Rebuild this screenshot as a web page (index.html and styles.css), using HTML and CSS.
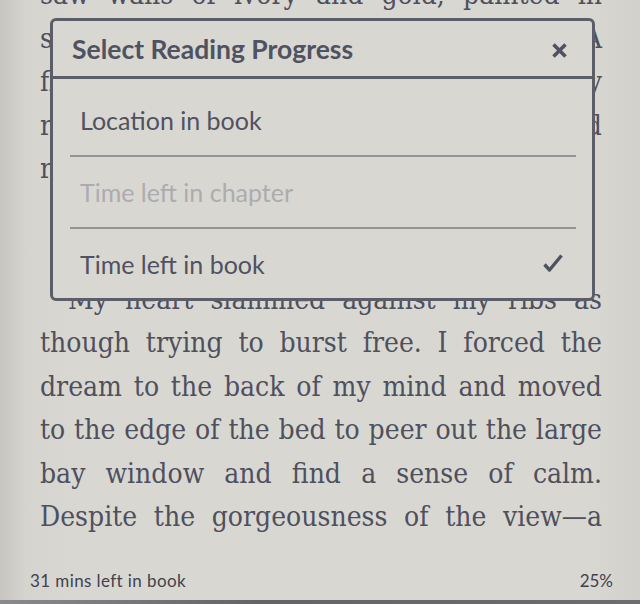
FILE: index.html
```html
<!DOCTYPE html>
<html lang="en">
<head>
    <meta charset="UTF-8">
    <meta name="viewport" content="width=device-width, initial-scale=1.0">
    <title>Reader</title>
    <link rel="stylesheet" href="styles.css">
</head>
<body>
    <div class="screen">
        <div class="page">
            <div class="line">saw walls of ivory and gold, painted in</div>
            <div class="line">scenes of a kingdom I had never seen. A</div>
            <div class="line">flock of white birds circled in the sky</div>
            <div class="line">raised above a garden of roses and sand</div>
            <div class="line last">rivers of silver.</div>
            <div class="line last indent">Then I woke.</div>
            <div class="line last indent">Alone.</div>
            <div class="line indent">My heart slammed against my ribs as</div>
            <div class="line">though trying to burst free. I forced the</div>
            <div class="line">dream to the back of my mind and moved</div>
            <div class="line">to the edge of the bed to peer out the large</div>
            <div class="line">bay window and find a sense of calm.</div>
            <div class="line">Despite the gorgeousness of the view—a</div>
        </div>

        <div class="status">
            <span class="status-left">31 mins left in book</span>
            <span>25%</span>
        </div>
        <div class="bezel"></div>

        <!-- reading progress picker -->
        <div class="dialog">
            <div class="dialog-header">
                <span class="dialog-title">Select Reading Progress</span>
                <svg class="close" width="17" height="17" viewBox="0 0 17 17">
                    <path d="M2.5 2.5 L14.5 14.5 M14.5 2.5 L2.5 14.5" stroke="#4f5260" stroke-width="3.6" stroke-linecap="butt" fill="none"/>
                </svg>
            </div>
            <ul class="options">
                <li class="option">Location in book</li>
                <li class="option disabled">Time left in chapter</li>
                <li class="option selected">
                    <span>Time left in book</span>
                    <svg class="check" width="22" height="20" viewBox="0 0 22 20">
                        <path d="M2.5 11.5 L7.5 17 L19.5 2.5" stroke="#4f5260" stroke-width="3.4" stroke-linejoin="round" fill="none"/>
                    </svg>
                </li>
            </ul>
        </div>
    </div>
</body>
</html>
```

FILE: styles.css
```css
html, body {
    margin: 0;
    padding: 0;
}
body {
    background-color: #d8d6d1;
}
.screen {
    position: relative;
    width: 640px;
    height: 604px;
    overflow: hidden;
    display: flex;
    flex-direction: column;
    background: linear-gradient(to right, #c8c6c0 0, #d6d4cf 26px, #d9d7d2 80px, #d9d7d2 590px, #d3d1cc 640px);
}
.page {
    flex: 1;
    margin-top: -27px;
    padding: 0 38px 0 40px;
    font-family: "DejaVu Serif", serif;
    font-stretch: condensed;
    font-size: 28px;
    line-height: 43.5px;
    color: #4e505d;
}
.line {
    text-align: justify;
    text-align-last: justify;
    white-space: nowrap;
}
.line.last {
    text-align-last: left;
}
.indent {
    text-indent: 28px;
}
.status {
    display: flex;
    justify-content: space-between;
    align-items: baseline;
    padding: 0 27px 0 30px;
    height: 24px;
    margin-bottom: 6px;
    font-family: Lato, "Open Sans", sans-serif;
    font-size: 17px;
    color: #40424d;
}
.status-left {
    letter-spacing: 0.4px;
}
.bezel {
    height: 4px;
    background: linear-gradient(to right, #8a8a8e, #626469 40%, #6c6d72);
}
.dialog {
    position: absolute;
    left: 50px;
    top: 18px;
    width: 545px;
    height: 283px;
    box-sizing: border-box;
    border: 3px solid #5b5d68;
    border-radius: 6px;
    background-color: #d9d7d2;
    font-family: Lato, "Open Sans", sans-serif;
    color: #4f5260;
}
.dialog-header {
    display: flex;
    align-items: center;
    justify-content: space-between;
    height: 55px;
    padding: 0 24px 0 19px;
    border-bottom: 3px solid #5b5d68;
}
.dialog-title {
    font-size: 26.5px;
    font-weight: 700;
}
.close {
    display: block;
    margin-top: 4px;
}
.options {
    list-style: none;
    margin: 0;
    padding: 6px 16px 0 17px;
}
.option {
    display: flex;
    align-items: center;
    justify-content: space-between;
    height: 70px;
    padding: 0 12px 0 10px;
    font-size: 25px;
    line-height: 30px;
    border-bottom: 2px solid #939398;
}
.option.selected {
    border-bottom: none;
}
.option.disabled {
    color: #acacaf;
}
.check {
    display: block;
    margin-top: -2px;
}
```
